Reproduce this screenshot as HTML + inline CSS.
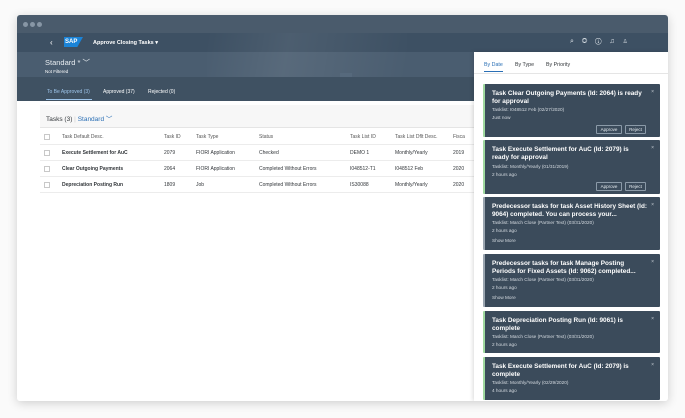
<!DOCTYPE html>
<html><head><meta charset="utf-8"><style>
*{margin:0;padding:0;box-sizing:border-box}
body{width:685px;height:418px;background:#fafafa;font-family:"Liberation Sans",sans-serif;position:relative;overflow:hidden}
.win{position:absolute;left:17px;top:15px;width:651px;height:386px;background:#fff;box-shadow:0 2px 10px rgba(0,0,0,.18);border-radius:3px;overflow:hidden}
.title{position:absolute;left:0;top:0;width:651px;height:18px;background:#4a5b6c}
.dot{position:absolute;top:7px;width:5px;height:5px;border-radius:50%;background:#8796a5}
.shell{position:absolute;left:0;top:18px;width:651px;height:19px;background:#3d5063}
.hdr{position:absolute;left:0;top:37px;width:651px;height:25px;background:#4a5d70}
.shine{position:absolute;left:190px;top:18px;width:200px;height:44px;background:linear-gradient(100deg,rgba(255,255,255,0) 0,rgba(255,255,255,.08) 40%,rgba(255,255,255,0) 100%)}
.tabs{position:absolute;left:0;top:62px;width:651px;height:24px;background:#3f5162}
.t{position:absolute;color:#fff;font-size:5px;white-space:nowrap}
.content{position:absolute;left:0;top:86px;width:651px;height:300px;background:#fff}
.tbl{position:absolute;left:23px;top:4px;width:440px;height:300px;background:#fff}
.tb{position:absolute;left:0;top:0;width:440px;height:23px;background:#f7f7f7;border-bottom:1px solid #e5e5e5}
.row{position:absolute;left:0;width:440px;height:16px;border-bottom:1px solid #ececec;font-size:5px;color:#32363a}
.row span{position:absolute;top:5px;white-space:nowrap}
.cb{position:absolute;left:4px;top:5px;width:6px;height:6px;border:1px solid #c8c8c8}
.panel{position:absolute;left:457px;top:37px;width:194px;height:349px;background:#fff;box-shadow:-1px 0 4px rgba(0,0,0,.15)}
.card{position:absolute;left:9px;width:177px;background:#3b4b5b;color:#fff;border-left:2px solid #9fd89f;border-radius:1px}
.card.g{border-left-color:#9aa5b0}
.card b{position:absolute;left:7px;top:6px;width:155px;font-size:6.4px;line-height:7.5px}
.card .s{position:absolute;left:7px;font-size:4.7px;color:#d5dbe1;white-space:nowrap}
.x{position:absolute;right:6px;top:5px;font-size:5px;color:#c8cfd6}
.btn{position:absolute;top:0;height:9px;border:1px solid #8b9aa8;font-size:4.5px;color:#e6ecf0;text-align:center;line-height:7px;border-radius:1px}
</style></head><body>
<div class="win">
<div class="title"><div class="dot" style="left:6px"></div><div class="dot" style="left:13px"></div><div class="dot" style="left:20px"></div></div>
<div class="shell"></div><div class="hdr"></div><div class="shine"></div>
<div class="t" style="left:33px;top:23px;font-size:8px">&#8249;</div>
<div style="position:absolute;left:47px;top:22px;width:19px;height:10px;background:#1b84d8;clip-path:polygon(0 0,100% 0,70% 100%,0 100%);color:#fff;font-size:6px;font-weight:bold;line-height:10px;padding-left:1px">SAP</div>
<div class="t" style="left:76px;top:25px;font-size:5.5px;font-weight:bold">Approve Closing Tasks ▾</div>
<div class="t" style="left:553px;top:23px;font-size:7px;color:#dfe5ea">⌕&nbsp;&nbsp;&nbsp;&nbsp;◎&nbsp;&nbsp;&nbsp;&nbsp;ⓘ&nbsp;&nbsp;&nbsp;&nbsp;♫&nbsp;&nbsp;&nbsp;&nbsp;♙</div>
<div class="t" style="left:28px;top:42px;font-size:7.5px;color:#e8edf1">Standard * ﹀</div>
<div class="t" style="left:28px;top:54px;font-size:4.5px">Not Filtered</div>
<div style="position:absolute;left:323px;top:58px;width:12px;height:5px;background:#56697c"></div>
<div class="tabs"></div>
<div class="t" style="left:30px;top:74px;color:#9dc4ea">To Be Approved (3)</div>
<div style="position:absolute;left:29px;top:84px;width:46px;height:1px;background:#9dc4ea"></div>
<div class="t" style="left:86px;top:74px">Approved (37)</div>
<div class="t" style="left:131px;top:74px">Rejected (0)</div>
<div class="content"><div class="tbl">
<div class="tb"><span style="position:absolute;left:6px;top:8px;font-size:6.5px;color:#32363a">Tasks (3) <span style="color:#ccc">|</span> <span style="color:#2a6fb5">Standard ﹀</span></span></div>
<div class="row" style="top:24px;color:#555"><div class="cb"></div><span style="left:22px">Task Default Desc.</span><span style="left:124px">Task ID</span><span style="left:156px">Task Type</span><span style="left:219px">Status</span><span style="left:310px">Task List ID</span><span style="left:355px">Task List Dflt Desc.</span><span style="left:413px">Fisca</span></div>
<div class="row" style="top:40px"><div class="cb"></div><span style="left:22px;font-weight:bold">Execute Settlement for AuC</span><span style="left:124px">2079</span><span style="left:156px">FIORI Application</span><span style="left:219px">Checked</span><span style="left:310px">DEMO 1</span><span style="left:355px">Monthly/Yearly</span><span style="left:413px">2019</span></div>
<div class="row" style="top:56px"><div class="cb"></div><span style="left:22px;font-weight:bold">Clear Outgoing Payments</span><span style="left:124px">2064</span><span style="left:156px">FIORI Application</span><span style="left:219px">Completed Without Errors</span><span style="left:310px">I048512-T1</span><span style="left:355px">I048512 Feb</span><span style="left:413px">2020</span></div>
<div class="row" style="top:72px"><div class="cb"></div><span style="left:22px;font-weight:bold">Depreciation Posting Run</span><span style="left:124px">1809</span><span style="left:156px">Job</span><span style="left:219px">Completed Without Errors</span><span style="left:310px">IS30088</span><span style="left:355px">Monthly/Yearly</span><span style="left:413px">2020</span></div>
</div></div>
<div class="panel">
<div style="position:absolute;left:10px;top:10px;font-size:5.3px;color:#2a6fb5">By Date</div>
<div style="position:absolute;left:10px;top:19px;width:19px;height:1px;background:#2a6fb5"></div>
<div style="position:absolute;left:41px;top:10px;font-size:5.3px;color:#32363a">By Type</div>
<div style="position:absolute;left:72px;top:10px;font-size:5.3px;color:#32363a">By Priority</div>
<div style="position:absolute;left:0;top:21px;width:194px;height:1px;background:#e5e5e5"></div>
<div class="card" style="top:32px;height:53px"><b>Task Clear Outgoing Payments (Id: 2064) is ready for approval</b><span class="x">×</span><span class="s" style="top:23px">Tasklist: I048512 Feb (02/27/2020)</span><span class="s" style="top:31px">Just now</span><span class="btn" style="left:111px;top:41px;width:26px">Approve</span><span class="btn" style="left:140px;top:41px;width:21px">Reject</span></div>
<div class="card" style="top:88px;height:54px"><b>Task Execute Settlement for AuC (Id: 2079) is ready for approval</b><span class="x">×</span><span class="s" style="top:24px">Tasklist: Monthly/Yearly (01/31/2019)</span><span class="s" style="top:32px">2 hours ago</span><span class="btn" style="left:111px;top:42px;width:26px">Approve</span><span class="btn" style="left:140px;top:42px;width:21px">Reject</span></div>
<div class="card g" style="top:145px;height:53px"><b>Predecessor tasks for task Asset History Sheet (Id: 9064) completed. You can process your...</b><span class="x">×</span><span class="s" style="top:23px">Tasklist: March Close (Partner Text) (03/31/2020)</span><span class="s" style="top:31px">2 hours ago</span><span class="s" style="top:41px">Show More</span></div>
<div class="card g" style="top:202px;height:53px"><b>Predecessor tasks for task Manage Posting Periods for Fixed Assets (Id: 9062) completed...</b><span class="x">×</span><span class="s" style="top:23px">Tasklist: March Close (Partner Text) (03/31/2020)</span><span class="s" style="top:31px">2 hours ago</span><span class="s" style="top:41px">Show More</span></div>
<div class="card" style="top:259px;height:42px"><b>Task Depreciation Posting Run (Id: 9061) is complete</b><span class="x">×</span><span class="s" style="top:23px">Tasklist: March Close (Partner Text) (03/31/2020)</span><span class="s" style="top:31px">2 hours ago</span></div>
<div class="card" style="top:305px;height:43px"><b>Task Execute Settlement for AuC (Id: 2079) is complete</b><span class="x">×</span><span class="s" style="top:23px">Tasklist: Monthly/Yearly (02/29/2020)</span><span class="s" style="top:31px">4 hours ago</span></div>
</div>
</div>
</body></html>
